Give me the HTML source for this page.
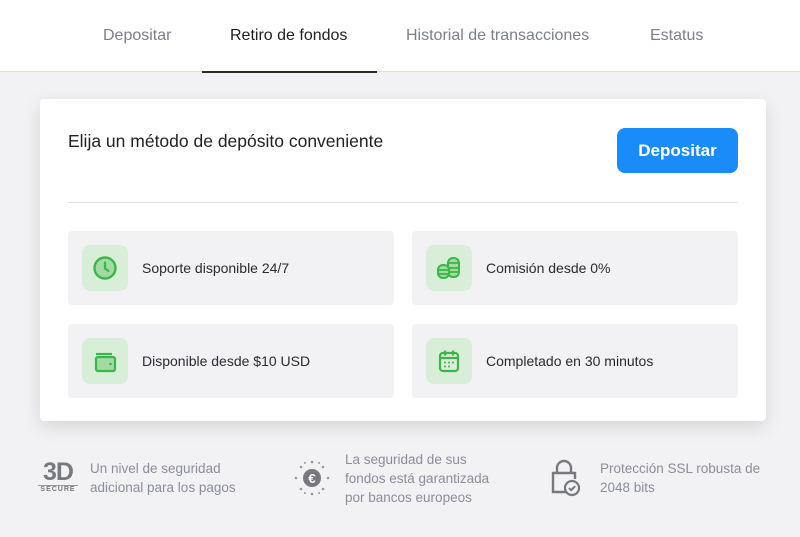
<!DOCTYPE html>
<html><head><style>
*{margin:0;padding:0;box-sizing:border-box}
body{width:800px;height:537px;background:#f2f2f5;font-family:"Liberation Sans",sans-serif;position:relative;overflow:hidden;color:#222}
.hdr{position:absolute;left:0;top:0;width:800px;height:72px;background:#fff;border-bottom:1px solid #dcdce2}
.tab{position:absolute;top:27px;font-size:16px;color:#7b7f8e}
.tab.a{color:#1f1f24}
.ul{position:absolute;left:202px;top:71px;width:175px;height:2px;background:#2a2a30}
.card{position:absolute;left:40px;top:99px;width:726px;height:322px;background:#fff;border-radius:4px;box-shadow:0 6px 18px rgba(0,0,0,.12)}
.title{position:absolute;left:28px;top:32px;font-size:17.5px;color:#222}
.btn{position:absolute;left:577px;top:29px;width:121px;height:45px;background:#1a8cfa;border-radius:8px;color:#fff;font-weight:bold;font-size:17px;text-align:center;line-height:45px}
.div{position:absolute;left:28px;top:103px;width:670px;height:1px;background:#e2e2e6}
.it{position:absolute;width:326px;height:74px;background:#f2f2f5;border-radius:4px}
.ic{position:absolute;left:14px;top:14px;width:46px;height:46px;background:#d8eed8;border-radius:8px;display:flex;align-items:center;justify-content:center}
.it span{position:absolute;left:74px;top:29px;font-size:14px;color:#2a2a30}
.ft{position:absolute;font-size:13.5px;color:#8b8e9a;line-height:19px}
</style></head><body>
<div class="hdr">
<div class="tab" style="left:103px">Depositar</div>
<div class="tab a" style="left:230px">Retiro de fondos</div>
<div class="tab" style="left:406px">Historial de transacciones</div>
<div class="tab" style="left:650px">Estatus</div>
<div class="ul"></div>
</div>
<div class="card">
<div class="title">Elija un método de depósito conveniente</div>
<div class="btn">Depositar</div>
<div class="div"></div>
<div class="it" style="left:28px;top:132px"><div class="ic"><svg width="26" height="26" viewBox="0 0 26 26"><circle cx="13" cy="13" r="10.5" fill="#a3d9a3" stroke="#3cb54a" stroke-width="2.4"/><path d="M13 7.5V13.5l3.5 2.5" stroke="#3cb54a" stroke-width="2.2" fill="none" stroke-linecap="round"/></svg></div><span>Soporte disponible 24/7</span></div>
<div class="it" style="left:372px;top:132px"><div class="ic"><svg width="28" height="26" viewBox="0 0 28 26"><g fill="#a3d9a3" stroke="#3cb54a" stroke-width="2"><rect x="13" y="3" width="11" height="19" rx="5"/><rect x="3" y="10" width="11" height="13" rx="5"/></g><path d="M13 8h11M13 13h11M13 17h11M3 15h11M3 19h11" stroke="#3cb54a" stroke-width="1.8"/></svg></div><span>Comisión desde 0%</span></div>
<div class="it" style="left:28px;top:225px"><div class="ic"><svg width="26" height="26" viewBox="0 0 26 26"><path d="M4 6h16" stroke="#3cb54a" stroke-width="2.2"/><rect x="4" y="9" width="19" height="14" rx="2" fill="#a3d9a3" stroke="#3cb54a" stroke-width="2.2"/><circle cx="18.5" cy="16" r="1.3" fill="#3cb54a"/></svg></div><span>Disponible desde $10 USD</span></div>
<div class="it" style="left:372px;top:225px"><div class="ic"><svg width="26" height="26" viewBox="0 0 26 26"><rect x="4" y="5" width="18" height="18" rx="3" fill="#d8eed8" stroke="#3cb54a" stroke-width="2.2"/><path d="M4 10h18M9 2.5v5M17 2.5v5" stroke="#3cb54a" stroke-width="2.2"/><g fill="#3cb54a"><circle cx="9" cy="14.5" r="1"/><circle cx="13" cy="14.5" r="1"/><circle cx="17" cy="14.5" r="1"/><circle cx="9" cy="18.5" r="1"/><circle cx="13" cy="18.5" r="1"/></g></svg></div><span>Completado en 30 minutos</span></div>
</div>
<div style="position:absolute;left:38px;top:460px;width:40px;text-align:center;color:#77797f"><div style="font-weight:bold;font-size:25px;line-height:24px;letter-spacing:-1px">3D</div><div style="border-top:1px solid #999;margin-top:1px;font-size:7px;font-weight:bold;letter-spacing:1px">SECURE</div></div>
<div class="ft" style="left:90px;top:459px">Un nivel de seguridad<br>adicional para los pagos</div>
<svg style="position:absolute;left:292px;top:458px" width="40" height="40" viewBox="0 0 40 40"><circle cx="20" cy="20" r="9" fill="#77797f"/><text x="20" y="25" font-size="13" font-family="Liberation Sans" fill="#fff" text-anchor="middle" font-weight="bold">€</text><g fill="#999"><circle cx="20" cy="4" r="1.3"/><circle cx="20" cy="36" r="1.3"/><circle cx="4" cy="20" r="1.3"/><circle cx="36" cy="20" r="1.3"/><circle cx="9" cy="9" r="1.3"/><circle cx="31" cy="9" r="1.3"/><circle cx="9" cy="31" r="1.3"/><circle cx="31" cy="31" r="1.3"/><circle cx="13" cy="5" r="1"/><circle cx="27" cy="5" r="1"/><circle cx="13" cy="35" r="1"/><circle cx="27" cy="35" r="1"/></g></svg>
<div class="ft" style="left:345px;top:450px">La seguridad de sus<br>fondos está garantizada<br>por bancos europeos</div>
<svg style="position:absolute;left:550px;top:459px" width="32" height="38" viewBox="0 0 32 38"><path d="M7 13V9a7 7 0 0 1 14 0v4" stroke="#77797f" stroke-width="2.4" fill="none"/><path d="M16 33H3V14h22v6" stroke="#77797f" stroke-width="2.4" fill="none"/><circle cx="22" cy="29" r="7" fill="#f2f2f5" stroke="#77797f" stroke-width="2.2"/><path d="M19 29l2.2 2.2 4-4" stroke="#77797f" stroke-width="2" fill="none"/></svg>
<div class="ft" style="left:600px;top:459px">Protección SSL robusta de<br>2048 bits</div>
</body></html>
